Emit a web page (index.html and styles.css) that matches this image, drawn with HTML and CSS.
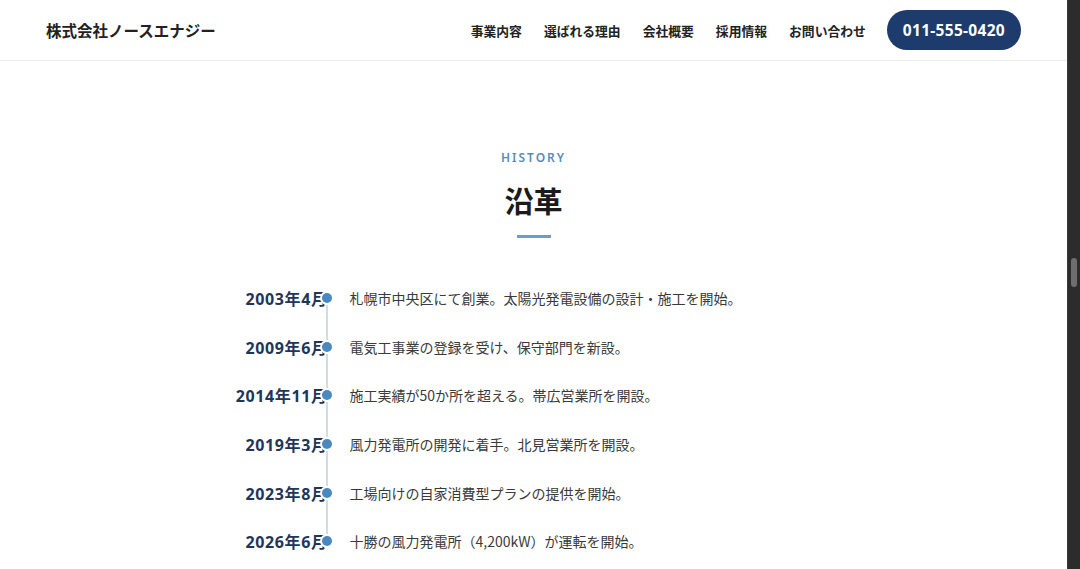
FILE: index.html
```html
<!DOCTYPE html>
<html lang="ja">
<head>
  <meta charset="UTF-8" />
  <meta name="viewport" content="width=device-width, initial-scale=1.0"/>
  <title>沿革 - 株式会社ノースエナジー</title>
  <link rel="stylesheet" href="styles.css">
</head>
<body>
  <div class="page">
    <header class="site-header">
      <div class="logo">株式会社ノースエナジー</div>
      <nav class="nav">
        <a href="#">事業内容</a>
        <a href="#">選ばれる理由</a>
        <a href="#">会社概要</a>
        <a href="#">採用情報</a>
        <a href="#">お問い合わせ</a>
        <a href="#" class="tel-btn">011-555-0420</a>
      </nav>
    </header>

    <!-- History -->
    <section class="history">
      <p class="section-label">HISTORY</p>
      <h2 class="section-title">沿革</h2>
      <div class="section-bar"></div>

      <ul class="timeline">
        <li class="item">
          <span class="item-date">2003年4月</span>
          <span class="item-text">札幌市中央区にて創業。太陽光発電設備の設計・施工を開始。</span>
        </li>
        <li class="item">
          <span class="item-date">2009年6月</span>
          <span class="item-text">電気工事業の登録を受け、保守部門を新設。</span>
        </li>
        <li class="item">
          <span class="item-date">2014年11月</span>
          <span class="item-text">施工実績が50か所を超える。帯広営業所を開設。</span>
        </li>
        <li class="item">
          <span class="item-date">2019年3月</span>
          <span class="item-text">風力発電所の開発に着手。北見営業所を開設。</span>
        </li>
        <li class="item">
          <span class="item-date">2023年8月</span>
          <span class="item-text">工場向けの自家消費型プランの提供を開始。</span>
        </li>
        <li class="item">
          <span class="item-date">2026年6月</span>
          <span class="item-text">十勝の風力発電所（4,200kW）が運転を開始。</span>
        </li>
      </ul>
    </section>
  </div>

  <!-- window scrollbar -->
  <div class="scrollbar"><div class="scrollbar-thumb"></div></div>
</body>
</html>
```

FILE: styles.css
```css
html, body {
  height: 100%;
  overflow: hidden;
}

body {
  font-family: "Noto Sans CJK JP", "Noto Sans", sans-serif;
  margin: 0;
  background-color: #fff;
  color: #333;
}

.page {
  width: calc(100% - 13px);
}

.site-header {
  display: flex;
  align-items: center;
  justify-content: space-between;
  height: 61px;
  padding: 0 46px;
  border-bottom: 1px solid #ececec;
  box-sizing: border-box;
}

.logo {
  font-size: 15.5px;
  font-weight: 600;
  color: #222;
}

.nav {
  display: flex;
  align-items: center;
  gap: 22px;
}

.nav a {
  font-size: 12.8px;
  font-weight: 600;
  color: #222;
  text-decoration: none;
}

.nav .tel-btn {
  display: flex;
  align-items: center;
  height: 40px;
  padding: 0 16px;
  margin-left: -1px;
  border-radius: 20px;
  background-color: #1d3b6c;
  color: #fff;
  font-family: "Noto Sans", sans-serif;
  font-size: 15.5px;
  font-weight: 700;
  letter-spacing: 0.3px;
}

.history {
  padding-top: 89px;
  text-align: center;
}

.section-label {
  margin: 0;
  font-family: "Noto Sans", sans-serif;
  font-size: 12px;
  font-weight: 600;
  letter-spacing: 2px;
  color: #5b8bb6;
  line-height: 16px;
}

.section-title {
  margin: 16px 0 0;
  font-size: 29px;
  font-weight: 700;
  color: #1b1b1b;
  line-height: 36px;
}

.section-bar {
  width: 34px;
  height: 3px;
  margin: 17px auto 0;
  background-color: #6d9cc7;
}

/* Timeline */
.timeline {
  position: relative;
  list-style: none;
  width: 620px;
  margin: 36px auto 0;
  padding: 0;
  text-align: left;
}

.timeline::before {
  content: "";
  position: absolute;
  left: 102px;
  top: 24px;
  bottom: 24px;
  width: 2px;
  background-color: #d3dbe3;
}

.item {
  position: relative;
  display: grid;
  grid-template-columns: 104px 1fr;
  column-gap: 22px;
  align-items: center;
  height: 48.6px;
}

.item::after {
  content: "";
  position: absolute;
  left: 98px;
  top: 50%;
  width: 10px;
  height: 10px;
  margin-top: -5px;
  border-radius: 50%;
  background-color: #4a88c0;
  box-shadow: 0 0 0 2px #fff;
}

.item-date {
  text-align: right;
  white-space: nowrap;
  font-family: "Noto Sans", "Noto Sans CJK JP", sans-serif;
  font-size: 16px;
  font-weight: 700;
  letter-spacing: 0.6px;
  color: #1f3659;
}

.item-text {
  font-size: 14px;
  color: #3a3a3a;
}

.scrollbar {
  position: fixed;
  top: 0;
  right: 0;
  width: 13px;
  height: 100%;
  background-color: #2c2c2c;
  border-left: 1px solid #3a3a3a;
  box-sizing: border-box;
}

.scrollbar-thumb {
  width: 6px;
  height: 29px;
  margin: 258px 0 0 3px;
  border-radius: 3px;
  background-color: #6e6e6e;
}
```
